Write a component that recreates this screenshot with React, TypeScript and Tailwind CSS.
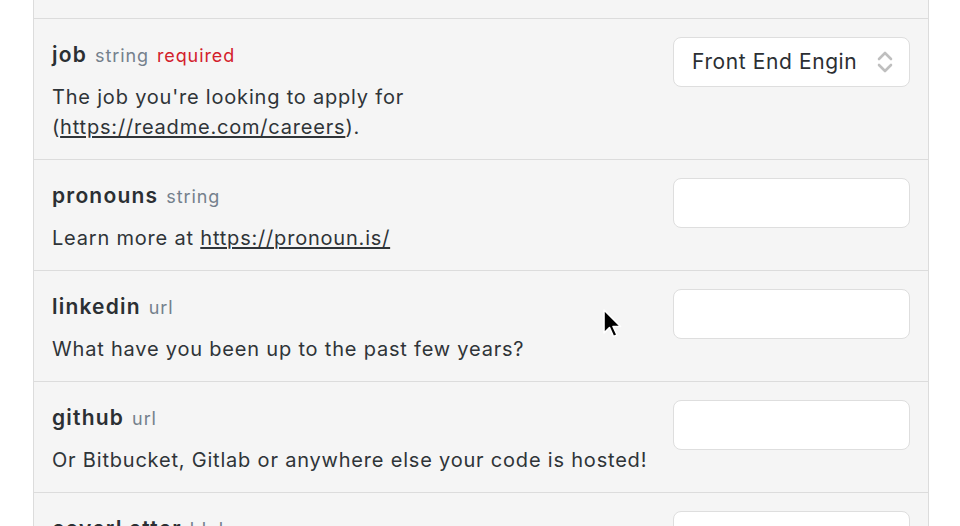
import React from "react";

type Field = {
  name: string;
  type: string;
  required?: boolean;
  desc: React.ReactNode;
  select?: string;
};

const fields: Field[] = [
  {
    name: "job",
    type: "string",
    required: true,
    select: "Front End Engineer",
    desc: (
      <>
        The job you're looking to apply for
        <br />(<a className="underline underline-offset-2">https://readme.com/careers</a>).
      </>
    ),
  },
  {
    name: "pronouns",
    type: "string",
    desc: (
      <>
        Learn more at <a className="underline underline-offset-2">https://pronoun.is/</a>
      </>
    ),
  },
  { name: "linkedin", type: "url", desc: "What have you been up to the past few years?" },
  { name: "github", type: "url", desc: "Or Bitbucket, Gitlab or anywhere else your code is hosted!" },
  { name: "coverLetter", type: "blob", desc: "Tell us a bit about yourself." },
];

function Chevrons() {
  return (
    <svg width="16" height="24" viewBox="0 0 16 24" fill="none" stroke="#bfbfbf" strokeWidth="2.6" strokeLinecap="round" strokeLinejoin="round">
      <path d="M2 9 L8 3 L14 9" />
      <path d="M2 15 L8 21 L14 15" />
    </svg>
  );
}

function Cursor() {
  return (
    <svg width="22" height="32" viewBox="0 0 22 32" className="absolute left-[601px] top-[308px]">
      <path d="M3 2 L3 25 L8.5 19.5 L12.5 28.5 L16 27 L12 18.5 L19.5 18.5 Z" fill="#000" stroke="#fff" strokeWidth="1.6" strokeLinejoin="round" />
    </svg>
  );
}

function Row({ f }: { f: Field }) {
  return (
    <div className="flex justify-between border-t border-[#dcdcdc] px-[18px]">
      <div className="flex-1 pt-[22px] pb-[17px] pr-4">
        <div className="flex items-baseline gap-[8px] h-[28px] leading-[28px]">
          <span className="text-[21px] font-semibold tracking-[1.2px] text-[#2b2f33]">{f.name}</span>
          <span className="text-[18px] tracking-[0.9px] text-[#74808c]">{f.type}</span>
          {f.required && <span className="text-[18px] tracking-[0.9px] text-[#d3202c]">required</span>}
        </div>
        <p className="mt-[13px] text-[20px] leading-[30px] tracking-[0.8px] text-[#2f3438]">{f.desc}</p>
      </div>
      <div className="pt-[18px]">
        {f.select ? (
          <div className="flex items-center w-[237px] h-[50px] rounded-[8px] border border-[#dedede] bg-white pl-[18px] pr-[16px]">
            <span className="w-[166px] overflow-hidden whitespace-nowrap text-[21px] tracking-[0.6px] text-[#2b2f33]">{f.select}</span>
            <span className="ml-auto flex">
              <Chevrons />
            </span>
          </div>
        ) : (
          <div className="w-[237px] h-[50px] rounded-[8px] border border-[#dedede] bg-white" />
        )}
      </div>
    </div>
  );
}

export default function App() {
  return (
    <div
      className="relative h-[526px] w-[960px] overflow-hidden bg-white"
      style={{ fontFamily: "Inter, 'Open Sans', sans-serif" }}
    >
      <div className="ml-[33px] w-[896px] border-x border-[#dcdcdc] bg-[#f5f5f5]">
        <div className="h-[18px]" />
        {fields.map((f) => (
          <Row key={f.name} f={f} />
        ))}
      </div>
      <Cursor />
    </div>
  );
}
